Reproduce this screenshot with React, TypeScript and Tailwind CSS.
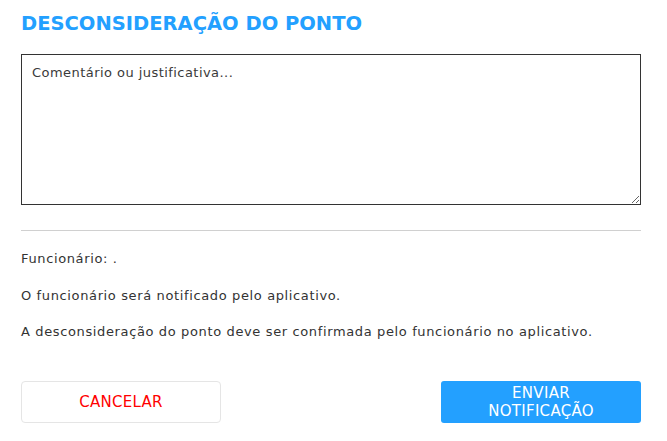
export default function App() {
  return (
    <div className="w-[667px] h-[441px] bg-white pl-[21px] pt-[10px] font-['DejaVu_Sans',sans-serif] text-[#333]">
      <div className="w-[620px]">
        <h1 className="text-[19.5px] leading-[28px] font-bold text-[#23a0ff]">DESCONSIDERAÇÃO DO PONTO</h1>
        <textarea
          className="mt-[16px] block w-[620px] h-[151px] border border-[#333] px-[10px] py-[8px] text-[13px] leading-[20px] tracking-[0.45px] placeholder:text-[#3a3a3a] outline-none resize-y"
          placeholder="Comentário ou justificativa..."
        />
        <div className="mt-[25px] h-px bg-[#d0d0d0]" />
        <div className="mt-[18px] text-[13px] leading-[20px] tracking-[0.63px] text-[#333] flex flex-col gap-[16.5px]">
          <p>Funcionário: .</p>
          <p>O funcionário será notificado pelo aplicativo.</p>
          <p>A desconsideração do ponto deve ser confirmada pelo funcionário no aplicativo.</p>
        </div>
        <div className="mt-[39px] flex justify-between">
          <button className="w-[200px] h-[42px] rounded-[4px] border border-[#e5e5e5] bg-white text-[#ff0000] text-[15px] tracking-[0.3px]">CANCELAR</button>
          <button className="w-[200px] h-[42px] rounded-[3px] bg-[#23a0ff] text-white text-[15px] leading-[18px] tracking-[0.3px]">ENVIAR<br />NOTIFICAÇÃO</button>
        </div>
      </div>
    </div>
  );
}
